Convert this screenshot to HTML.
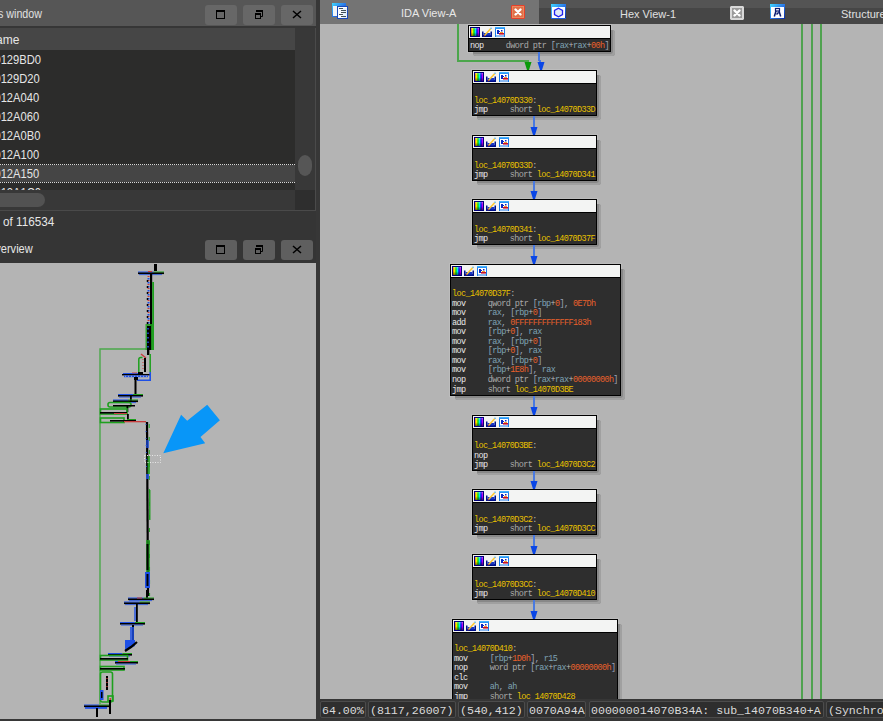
<!DOCTYPE html>
<html><head><meta charset="utf-8">
<style>
*{margin:0;padding:0;box-sizing:border-box}
html,body{width:883px;height:721px;overflow:hidden;background:#373737;font-family:"Liberation Sans",sans-serif}
.a{position:absolute}
.btn{position:absolute;width:32px;height:20px;border-radius:3px;background:#676767}
.btn2{background:#5f5f5f}
.btn svg{position:absolute;left:0;top:0}
.rt{position:absolute;left:-6px;height:19px;line-height:19px;color:#e6e6e6;font-size:12px;transform:scaleX(0.93);transform-origin:6px 0;white-space:pre}
.nd{position:absolute;border:1px solid #000;background:#2e2e2e}
.hal{position:absolute;background:#bcbcbc}
.shd{position:absolute;border-radius:3px;background:#888;box-shadow:inset -2px -2px 0 #a0a0a0}
.hd{position:absolute;left:0;top:0;right:0;height:13px;background:#f3f4f3;border-bottom:1px solid #000}
.ic{position:absolute;left:1px;top:1px}
.ln{position:absolute;left:1px;height:10px;line-height:10px;font-family:"Liberation Mono",monospace;font-size:8.5px;letter-spacing:-0.62px;white-space:pre}
.sb{position:absolute;top:701px;height:17px;background:#2e2e2e;border:1px solid #4c4c4c;border-radius:2px;font-family:"Liberation Mono",monospace;font-size:11.6px;color:#dadada;line-height:15px;padding-top:1px;padding-left:1px;white-space:pre;overflow:hidden}
.tt{position:absolute;font-size:11px;line-height:14px;color:#e0e0e0;white-space:pre}
</style></head><body>
<svg width="0" height="0" style="position:absolute">
<defs>
<linearGradient id="rb" x1="0" x2="1" y1="0" y2="0">
<stop offset="0" stop-color="#ff6000"/><stop offset=".18" stop-color="#ffff00"/><stop offset=".38" stop-color="#00e000"/><stop offset=".55" stop-color="#00ffff"/><stop offset=".75" stop-color="#0000ff"/><stop offset="1" stop-color="#ff00ff"/></linearGradient>
<linearGradient id="dk" x1="0" x2="0" y1="0" y2="1"><stop offset="0" stop-color="#fff" stop-opacity=".3"/><stop offset=".5" stop-color="#000" stop-opacity="0"/><stop offset="1" stop-color="#000" stop-opacity=".55"/></linearGradient>
<linearGradient id="wf" x1="0" x2="1" y1="0" y2="1"><stop offset="0" stop-color="#40d8ff"/><stop offset=".5" stop-color="#2a78e8"/><stop offset="1" stop-color="#0a2aa0"/></linearGradient>
<g id="hicons">
<rect x="0" y="0" width="10" height="10" fill="#00007a"/>
<rect x="1" y="1" width="8" height="8" fill="url(#rb)"/>
<rect x="1" y="1" width="8" height="8" fill="url(#dk)"/>
<path d="M12 4.5 h1.5 v3.5 h7 v-3.5 h1.5 v5.5 h-10z" fill="#00108a"/>
<path d="M13.5 6 L20.5 6 L20.5 8.5 L13.5 8.5z" fill="#1838c8"/>
<path d="M14.2 7.8 L20 1.2 L21.2 2.3 L15.3 8.8z" fill="#ffc830"/>
<path d="M20 1.2 L21.2 2.3 L22 1.2 L21 .3z" fill="#5ab0e8"/>
<path d="M14.2 7.8 L15.3 8.8 L13.6 9.6z" fill="#e86010"/>
<rect x="25" y="0" width="10" height="10" fill="#1a78e8"/>
<rect x="25" y="0" width="10" height="1.5" fill="#40b0ff"/>
<rect x="26" y="2" width="8" height="6.5" fill="#fff"/>
<path d="M27 3 h2 v1 h1 v1 h-1 v2 h-2z" fill="#0a28c0"/>
<rect x="31" y="3" width="1.5" height="1.5" fill="#0a28c0"/>
<rect x="29" y="6" width="5" height="1.6" fill="#c8102a"/>
<rect x="30" y="5" width="3" height="1" fill="#f0a030"/>
<rect x="26" y="9" width="8" height="1" fill="#8ab8f0"/>
</g>
</defs></svg>
<!-- LEFT PANEL: functions window -->
<div class="a" style="left:0;top:0;width:316px;height:26px;background:#565656"></div>
<div class="a" style="left:0;top:26px;width:316px;height:2px;background:#363636"></div>
<div class="tt" style="left:-3px;top:7px;font-size:12px;transform:scaleX(0.89);transform-origin:9px 0">s window</div>
<div class="btn" style="left:205px;top:5px"><svg width="32" height="20"><rect x="11.5" y="5.5" width="8" height="8" fill="none" stroke="#000"/><rect x="11" y="5" width="9" height="2" fill="#000"/></svg></div>
<div class="btn" style="left:243px;top:5px"><svg width="32" height="20"><path d="M13.5 7 V5.5 H19.5 V11.5 H18" fill="none" stroke="#000"/><rect x="13" y="5" width="7" height="2" fill="#000"/><rect x="12.5" y="8.5" width="5" height="5" fill="none" stroke="#000"/><rect x="12" y="8" width="6" height="2" fill="#000"/></svg></div>
<div class="btn" style="left:281px;top:5px"><svg width="32" height="20"><path d="M12 6 L20 13 M20 6 L12 13" stroke="#000" stroke-width="1.5"/></svg></div>
<div class="a" style="left:0;top:28px;width:316px;height:183px;background:#2c2c2b"></div>
<div class="a" style="left:0;top:28px;width:295px;height:22px;background:#464646"></div>
<div class="tt" style="left:-4px;top:33px;font-size:12px;color:#e6e6e6">ame</div>
<div class="a" style="left:0;top:165px;width:295px;height:17px;background:#454545"></div>
<div class="a" style="left:0;top:28px;width:295px;height:162px;overflow:hidden">
<div class="a" style="left:0;top:-28px;width:295px;height:200px"><div class="rt" style="top:51px">0129BD0</div><div class="rt" style="top:70px">0129D20</div><div class="rt" style="top:89px">012A040</div><div class="rt" style="top:108px">012A060</div><div class="rt" style="top:127px">012A0B0</div><div class="rt" style="top:146px">012A100</div><div class="rt" style="top:165px">012A150</div><div class="rt" style="top:184px">012A1C0</div></div></div>
<div class="a" style="left:0;top:164px;width:295px;height:1px;border-top:1px dotted #d8d8d8"></div>
<div class="a" style="left:0;top:182px;width:295px;height:1px;border-top:1px dotted #d8d8d8"></div>
<div class="a" style="left:0;top:190px;width:295px;height:20px;background:#383838"></div>
<div class="a" style="left:-20px;top:193px;width:65px;height:14px;border-radius:7px;background:#525252"></div>
<div class="a" style="left:295px;top:28px;width:20px;height:162px;background:#383838"></div>
<div class="a" style="left:298px;top:155px;width:14px;height:21px;border-radius:7px/9px;background:#565656"></div>
<div class="a" style="left:295px;top:190px;width:20px;height:20px;background:#2e2e2e"></div>
<div class="a" style="left:315px;top:28px;width:1px;height:183px;background:#4a4a4a"></div>
<div class="a" style="left:0;top:210px;width:316px;height:1px;background:#4a4a4a"></div>
<div class="a" style="left:0;top:211px;width:316px;height:52px;background:#353535"></div>
<div class="tt" style="left:3px;top:215px;font-size:12px;color:#e6e6e6;transform:scaleX(0.975);transform-origin:0 0">of 116534</div>
<div class="tt" style="left:-8px;top:242px;font-size:12px;color:#e6e6e6;transform:scaleX(0.92);transform-origin:41px 0">verview</div>
<div class="btn btn2" style="left:205px;top:240px"><svg width="32" height="20"><rect x="11.5" y="5.5" width="8" height="8" fill="none" stroke="#000"/><rect x="11" y="5" width="9" height="2" fill="#000"/></svg></div>
<div class="btn btn2" style="left:243px;top:240px"><svg width="32" height="20"><path d="M13.5 7 V5.5 H19.5 V11.5 H18" fill="none" stroke="#000"/><rect x="13" y="5" width="7" height="2" fill="#000"/><rect x="12.5" y="8.5" width="5" height="5" fill="none" stroke="#000"/><rect x="12" y="8" width="6" height="2" fill="#000"/></svg></div>
<div class="btn btn2" style="left:281px;top:240px"><svg width="32" height="20"><path d="M12 6 L20 13 M20 6 L12 13" stroke="#000" stroke-width="1.5"/></svg></div>
<div class="a" style="left:0;top:263px;width:316px;height:456px;background:#b4b4b4"></div>
<svg class="a" style="left:0;top:0" width="316" height="721" viewBox="0 0 316 721"><path d="M146 349 L100 349 L100 704" fill="none" stroke="#4aa84a" stroke-width="1.4"/><rect x="154" y="264" width="3" height="7" fill="#000"/><rect x="138" y="271.5" width="15.6" height="1.2" fill="#1e50e6"/><rect x="153.6" y="271.5" width="10.4" height="1.2" fill="#1ea01e"/><rect x="138" y="272.5" width="26" height="1.6" fill="#000"/><rect x="139" y="274.1" width="23" height="1" fill="#1e50e6" opacity="0.8"/><rect x="148" y="271" width="4" height="1" fill="#c83c3c"/><rect x="150" y="274" width="2.2" height="76" fill="#000"/><path d="M148.5 276 L148.5 350" fill="none" stroke="#c83c3c" stroke-width="2" stroke-dasharray="1 3"/><path d="M148.5 278 L148.5 350" fill="none" stroke="#1e50e6" stroke-width="2" stroke-dasharray="1.5 2.5"/><path d="M147.5 280 L147.5 350" fill="none" stroke="#000" stroke-width="1.5" stroke-dasharray="2 4"/><rect x="152.2" y="282" width="1.8" height="68" fill="#1ea01e"/><rect x="145.5" y="324" width="8.5" height="26" fill="#1ea01e" opacity="0.85"/><rect x="147" y="326" width="4" height="24" fill="#000"/><path d="M148 328 L148 348" fill="none" stroke="#1e50e6" stroke-width="1.5" stroke-dasharray="1.5 3"/><rect x="147" y="349" width="2.4" height="6" fill="#000"/><path d="M141 354 L146 358" fill="none" stroke="#c83c3c" stroke-width="1.5"/><path d="M138.8 372 V359.5 Q138.8 357.5 140.8 357.5 H142.5 M150.2 354 V372" fill="none" stroke="#1ea01e" stroke-width="1.5"/><rect x="144" y="358" width="2" height="14" fill="#000"/><path d="M143 359 L143 371" fill="none" stroke="#c83c3c" stroke-width="1" stroke-dasharray="1 2"/><rect x="123" y="373" width="15" height="1" fill="#1e50e6"/><rect x="132" y="372.5" width="5" height="0.8" fill="#c83c3c"/><rect x="122" y="374" width="29" height="1.4" fill="#000"/><rect x="138" y="372" width="5" height="3" fill="#000"/><rect x="124" y="375.4" width="24" height="1.8" fill="#1e50e6"/><path d="M125 376.3 L147 376.3" fill="none" stroke="#dadada" stroke-width="0.7" stroke-dasharray="1 2"/><path d="M137 380.2 H150.2 V372" fill="none" stroke="#1e50e6" stroke-width="1.6"/><rect x="134" y="377" width="4" height="3" fill="#000"/><rect x="134.5" y="379" width="2" height="15" fill="#000"/><rect x="118" y="394" width="15.0" height="1.2" fill="#1e50e6"/><rect x="133.0" y="394" width="10.0" height="1.2" fill="#1ea01e"/><rect x="118" y="395" width="25" height="1.6" fill="#000"/><rect x="119" y="396.6" width="22" height="1" fill="#1e50e6" opacity="0.8"/><rect x="130" y="396" width="1.8" height="5" fill="#000"/><rect x="113" y="399.5" width="15.0" height="1.2" fill="#1e50e6"/><rect x="128.0" y="399.5" width="10.0" height="1.2" fill="#1ea01e"/><rect x="113" y="400.5" width="25" height="1.6" fill="#000"/><rect x="114" y="402.1" width="22" height="1" fill="#1e50e6" opacity="0.8"/><rect x="108" y="402.5" width="23" height="4.5" fill="none" stroke="#1ea01e" stroke-width="1.6" rx="2"/><rect x="113" y="405" width="22" height="1.5" fill="#000"/><rect x="126.5" y="406" width="1.8" height="6" fill="#000"/><rect x="100.5" y="409" width="26.5" height="5" fill="none" stroke="#1ea01e" stroke-width="1.6" rx="0"/><rect x="100" y="412" width="27" height="1.6" fill="#000"/><rect x="114" y="413" width="13" height="1" fill="#c83c3c"/><rect x="127" y="414" width="1.8" height="6" fill="#000"/><rect x="100.5" y="418" width="23.5" height="4.5" fill="none" stroke="#1ea01e" stroke-width="1.6" rx="0"/><rect x="110" y="420" width="26" height="1.6" fill="#000"/><rect x="127" y="419" width="9" height="1" fill="#1ea01e"/><rect x="124" y="421" width="22" height="1.3" fill="#c83c3c"/><path d="M147 422 L148 596" fill="none" stroke="#000" stroke-width="2.2"/><path d="M149.2 424 L149.6 596" fill="none" stroke="#1ea01e" stroke-width="1" stroke-dasharray="4 9"/><path d="M146 424 L146.5 470" fill="none" stroke="#1e50e6" stroke-width="1" stroke-dasharray="1 6"/><rect x="146" y="440" width="3" height="8" fill="#1e50e6" opacity="0.7"/><rect x="147.5" y="456" width="2.5" height="18" fill="#1ea01e" opacity="0.8"/><rect x="146" y="474" width="3" height="5" fill="#1e50e6" opacity="0.8"/><rect x="149" y="490" width="1.5" height="30" fill="#1ea01e" opacity="0.9"/><rect x="146" y="540" width="4" height="32" fill="#1ea01e" opacity="0.75"/><rect x="146.5" y="544" width="2" height="26" fill="#000"/><rect x="145" y="572" width="5" height="16" fill="#1e50e6"/><rect x="146.5" y="574" width="2" height="12" fill="#000"/><rect x="146" y="590" width="2" height="8" fill="#000"/><rect x="128" y="597.5" width="15.6" height="1.2" fill="#1e50e6"/><rect x="143.6" y="597.5" width="10.4" height="1.2" fill="#1ea01e"/><rect x="128" y="598.5" width="26" height="1.6" fill="#000"/><rect x="129" y="600.1" width="23" height="1" fill="#1e50e6" opacity="0.8"/><rect x="137" y="597.5" width="5" height="1" fill="#c83c3c"/><rect x="124" y="601.5" width="15.6" height="1.2" fill="#1e50e6"/><rect x="139.6" y="601.5" width="10.4" height="1.2" fill="#1ea01e"/><rect x="124" y="602.5" width="26" height="1.6" fill="#000"/><rect x="125" y="604.1" width="23" height="1" fill="#1e50e6" opacity="0.8"/><rect x="136" y="604" width="1.8" height="18" fill="#000"/><rect x="134" y="607" width="2" height="14" fill="#1e50e6" opacity="0.7"/><rect x="120" y="622" width="15.0" height="1.2" fill="#1e50e6"/><rect x="135.0" y="622" width="10.0" height="1.2" fill="#1ea01e"/><rect x="120" y="623" width="25" height="1.6" fill="#000"/><rect x="121" y="624.6" width="22" height="1" fill="#1e50e6" opacity="0.8"/><rect x="132" y="625" width="2" height="16" fill="#000"/><rect x="130" y="627" width="4" height="13" fill="#1e50e6" opacity="0.8"/><path d="M125 640 L135 640 L135 646 L127 650 L125 650z" fill="#1e50e6"/><path d="M137 642 L131 647 L125 651" fill="none" stroke="#000" stroke-width="2.2"/><rect x="108" y="653" width="14.399999999999999" height="1.2" fill="#1e50e6"/><rect x="122.4" y="653" width="9.600000000000001" height="1.2" fill="#1ea01e"/><rect x="108" y="654" width="24" height="1.6" fill="#000"/><rect x="109" y="655.6" width="21" height="1" fill="#1e50e6" opacity="0.8"/><rect x="100.5" y="655.5" width="27" height="4.5" fill="none" stroke="#1ea01e" stroke-width="1.6" rx="0"/><rect x="100" y="658" width="28" height="1.6" fill="#000"/><rect x="115" y="661" width="13.799999999999999" height="1.2" fill="#1e50e6"/><rect x="128.8" y="661" width="9.200000000000001" height="1.2" fill="#1ea01e"/><rect x="115" y="662" width="23" height="1.6" fill="#000"/><rect x="116" y="663.6" width="20" height="1" fill="#1e50e6" opacity="0.8"/><rect x="118" y="661" width="12" height="1" fill="#c83c3c"/><rect x="100.5" y="666.5" width="23.5" height="3.5" fill="none" stroke="#1ea01e" stroke-width="1.6" rx="0"/><rect x="100" y="668" width="25" height="1.6" fill="#000"/><rect x="100.5" y="672" width="12" height="30" fill="none" stroke="#1ea01e" stroke-width="1.6" rx="2"/><rect x="106" y="676" width="2" height="14" fill="#000"/><path d="M107 678 L107 690" fill="none" stroke="#c83c3c" stroke-width="1.3" stroke-dasharray="1 3"/><rect x="100" y="690" width="3.5" height="10" fill="#1e50e6"/><rect x="101" y="692" width="1.5" height="6" fill="#000"/><rect x="108" y="696" width="5" height="5" fill="none" stroke="#1ea01e" stroke-width="1.6" rx="0"/><rect x="109.5" y="698" width="1.5" height="3" fill="#c83c3c"/><rect x="84" y="704.5" width="15.0" height="1.2" fill="#1e50e6"/><rect x="99.0" y="704.5" width="10.0" height="1.2" fill="#1ea01e"/><rect x="84" y="705.5" width="25" height="1.6" fill="#000"/><rect x="85" y="707.1" width="22" height="1" fill="#1e50e6" opacity="0.8"/><rect x="85" y="707" width="22" height="2" fill="#1e50e6" opacity="0.8"/><rect x="109" y="700" width="2" height="14" fill="#000"/><rect x="96" y="708" width="2" height="9" fill="#000"/><rect x="144.5" y="455.5" width="16" height="7" fill="none" stroke="#e8e8e8" stroke-width="1" stroke-dasharray="1 1.5"/><path d="M163.3 453.3 L181.1 414.8 L187.2 420.7 L207.2 404.8 L219.9 420.3 L200.5 437 L205.2 443.3 Z" fill="#0896f8"/></svg>
<!-- RIGHT PANEL -->
<div class="a" style="left:320px;top:0;width:563px;height:8px;background:#545454"></div>
<div class="a" style="left:539px;top:8px;width:344px;height:16px;background:#464646"></div>
<div class="a" style="left:320px;top:0;width:219px;height:24px;background:#747474"></div>
<svg class="a" style="left:332px;top:3px" width="17" height="17">
<rect x="0" y="0" width="14" height="14" fill="url(#wf)"/>
<rect x="1" y="3" width="12" height="10" fill="#f2f5f8"/>
<rect x="5" y="3" width="11" height="13" fill="#1848b8"/>
<rect x="6" y="4" width="9" height="11" fill="#fafcff"/>
<rect x="11" y="5" width="4" height="10" fill="#e4f0fc"/>
<rect x="7" y="5" width="4" height="1" fill="#405058"/>
<rect x="9" y="7" width="5" height="1" fill="#405058"/>
<rect x="9" y="9" width="5" height="1" fill="#405058"/>
<rect x="7" y="11" width="4" height="1" fill="#405058"/>
<rect x="9" y="13" width="5" height="1" fill="#405058"/>
</svg>
<div class="tt" style="left:401px;top:6px;color:#e8e8e8">IDA View-A</div>
<svg class="a" style="left:511px;top:5px" width="14" height="14">
<path d="M1 0 H13 L14 1 V13 L13 14 H1 L0 13 V1z" fill="#e8402a"/>
<rect x="1" y="1" width="12" height="12" fill="#e88a60"/>
<rect x="2" y="2" width="10" height="10" fill="#e07048"/>
<path d="M4.5 4.5 L9.5 9.5 M9.5 4.5 L4.5 9.5" stroke="#fff" stroke-width="2.4" stroke-linecap="round"/>
</svg>
<svg class="a" style="left:551px;top:4px" width="15" height="15">
<rect x="0" y="0" width="15" height="15" fill="url(#wf)"/>
<rect x="0" y="14" width="15" height="1" fill="#1a5ad8"/>
<rect x="1" y="3" width="13" height="11" fill="#fcfdff"/>
<path d="M7.5 4.2 L11.5 6.5 V10.5 L7.5 12.7 L3.5 10.5 V6.5z" fill="#dfe8f8" stroke="#2020f0" stroke-width="1.3"/>
</svg>
<div class="tt" style="left:620px;top:7px;color:#e0e0e0">Hex View-1</div>
<svg class="a" style="left:730px;top:6px" width="14" height="14">
<path d="M1 0 H13 L14 1 V13 L13 14 H1 L0 13 V1z" fill="#d8d8d8"/>
<rect x="2" y="2" width="10" height="10" fill="#9a9a9a"/>
<path d="M4.5 4.5 L9.5 9.5 M9.5 4.5 L4.5 9.5" stroke="#fff" stroke-width="2.4" stroke-linecap="round"/>
</svg>
<svg class="a" style="left:770px;top:4px" width="15" height="15">
<rect x="0" y="0" width="15" height="15" fill="url(#wf)"/>
<rect x="1" y="3" width="13" height="11" fill="#fcfdff"/>
<rect x="5.5" y="4.5" width="4" height="2.5" fill="#fff" stroke="#0a1a70" stroke-width="1.2"/>
<path d="M6 7 L4.3 12.5 M9 7 L10.7 12.5 M6.5 10.5 L8.5 8.5" stroke="#0a1a70" stroke-width="1.5"/>
</svg>
<div class="tt" style="left:841px;top:7px;color:#e0e0e0">Structures</div>
<div class="a" style="left:320px;top:24px;width:563px;height:675px;overflow:hidden;background:#b4b4b4">
<div class="a" style="left:-320px;top:-24px;width:883px;height:721px">
<div class="a" style="left:801px;top:24px;width:2px;height:675px;background:#50a250"></div>
<div class="a" style="left:811px;top:24px;width:2px;height:675px;background:#50a250"></div>
<div class="a" style="left:820px;top:24px;width:2px;height:675px;background:#50a250"></div>
<div class="a" style="left:538px;top:24px;width:2px;height:1px;background:#c01818"></div>
<div class="hal" style="left:467px;top:24px;width:145px;height:29px"></div><div class="shd" style="left:473px;top:30px;width:142px;height:26px"></div><div class="nd" style="left:468px;top:25px;width:143px;height:27px"><div class="hd"><svg class="ic" width="40" height="11"><use href="#hicons"/></svg></div><div class="ln" style="top:15px"><span style="color:#e8e8e8">nop     </span><span style="color:#a9a9a9">dword ptr </span><span style="color:#9ca4b8">[</span><span style="color:#7ea3b4">rax</span><span style="color:#b8b8b8">+</span><span style="color:#7ea3b4">rax</span><span style="color:#b8b8b8">+</span><span style="color:#e8602c">00h</span><span style="color:#9ca4b8">]</span></div></div>
<div class="hal" style="left:471px;top:69px;width:127px;height:48px"></div><div class="shd" style="left:477px;top:75px;width:124px;height:45px"></div><div class="nd" style="left:472px;top:70px;width:125px;height:46px"><div class="hd"><svg class="ic" width="40" height="11"><use href="#hicons"/></svg></div><div class="ln" style="top:25px"><span style="color:#e8c000">loc_14070D330</span><span style="color:#b8b8b8">:</span></div><div class="ln" style="top:34px"><span style="color:#e8e8e8">jmp     </span><span style="color:#a9a9a9">short </span><span style="color:#e8c000">loc_14070D33D</span></div></div>
<div class="hal" style="left:471px;top:134px;width:127px;height:48px"></div><div class="shd" style="left:477px;top:140px;width:124px;height:45px"></div><div class="nd" style="left:472px;top:135px;width:125px;height:46px"><div class="hd"><svg class="ic" width="40" height="11"><use href="#hicons"/></svg></div><div class="ln" style="top:25px"><span style="color:#e8c000">loc_14070D33D</span><span style="color:#b8b8b8">:</span></div><div class="ln" style="top:34px"><span style="color:#e8e8e8">jmp     </span><span style="color:#a9a9a9">short </span><span style="color:#e8c000">loc_14070D341</span></div></div>
<div class="hal" style="left:471px;top:198px;width:127px;height:48px"></div><div class="shd" style="left:477px;top:204px;width:124px;height:45px"></div><div class="nd" style="left:472px;top:199px;width:125px;height:46px"><div class="hd"><svg class="ic" width="40" height="11"><use href="#hicons"/></svg></div><div class="ln" style="top:25px"><span style="color:#e8c000">loc_14070D341</span><span style="color:#b8b8b8">:</span></div><div class="ln" style="top:34px"><span style="color:#e8e8e8">jmp     </span><span style="color:#a9a9a9">short </span><span style="color:#e8c000">loc_14070D37F</span></div></div>
<div class="hal" style="left:449px;top:263px;width:173px;height:134px"></div><div class="shd" style="left:455px;top:269px;width:170px;height:131px"></div><div class="nd" style="left:450px;top:264px;width:171px;height:132px"><div class="hd"><svg class="ic" width="40" height="11"><use href="#hicons"/></svg></div><div class="ln" style="top:24px"><span style="color:#e8c000">loc_14070D37F</span><span style="color:#b8b8b8">:</span></div><div class="ln" style="top:34px"><span style="color:#e8e8e8">mov     </span><span style="color:#a9a9a9">qword ptr </span><span style="color:#9ca4b8">[</span><span style="color:#7ea3b4">rbp</span><span style="color:#b8b8b8">+</span><span style="color:#e8602c">0</span><span style="color:#9ca4b8">]</span><span style="color:#9ca4b8">, </span><span style="color:#e8602c">0E7Dh</span></div><div class="ln" style="top:43px"><span style="color:#e8e8e8">mov     </span><span style="color:#7ea3b4">rax</span><span style="color:#9ca4b8">, </span><span style="color:#9ca4b8">[</span><span style="color:#7ea3b4">rbp</span><span style="color:#b8b8b8">+</span><span style="color:#e8602c">0</span><span style="color:#9ca4b8">]</span></div><div class="ln" style="top:53px"><span style="color:#e8e8e8">add     </span><span style="color:#7ea3b4">rax</span><span style="color:#9ca4b8">, </span><span style="color:#e8602c">0FFFFFFFFFFFFF183h</span></div><div class="ln" style="top:62px"><span style="color:#e8e8e8">mov     </span><span style="color:#9ca4b8">[</span><span style="color:#7ea3b4">rbp</span><span style="color:#b8b8b8">+</span><span style="color:#e8602c">0</span><span style="color:#9ca4b8">]</span><span style="color:#9ca4b8">, </span><span style="color:#7ea3b4">rax</span></div><div class="ln" style="top:72px"><span style="color:#e8e8e8">mov     </span><span style="color:#7ea3b4">rax</span><span style="color:#9ca4b8">, </span><span style="color:#9ca4b8">[</span><span style="color:#7ea3b4">rbp</span><span style="color:#b8b8b8">+</span><span style="color:#e8602c">0</span><span style="color:#9ca4b8">]</span></div><div class="ln" style="top:81px"><span style="color:#e8e8e8">mov     </span><span style="color:#9ca4b8">[</span><span style="color:#7ea3b4">rbp</span><span style="color:#b8b8b8">+</span><span style="color:#e8602c">0</span><span style="color:#9ca4b8">]</span><span style="color:#9ca4b8">, </span><span style="color:#7ea3b4">rax</span></div><div class="ln" style="top:91px"><span style="color:#e8e8e8">mov     </span><span style="color:#7ea3b4">rax</span><span style="color:#9ca4b8">, </span><span style="color:#9ca4b8">[</span><span style="color:#7ea3b4">rbp</span><span style="color:#b8b8b8">+</span><span style="color:#e8602c">0</span><span style="color:#9ca4b8">]</span></div><div class="ln" style="top:100px"><span style="color:#e8e8e8">mov     </span><span style="color:#9ca4b8">[</span><span style="color:#7ea3b4">rbp</span><span style="color:#b8b8b8">+</span><span style="color:#e8602c">1E8h</span><span style="color:#9ca4b8">]</span><span style="color:#9ca4b8">, </span><span style="color:#7ea3b4">rax</span></div><div class="ln" style="top:110px"><span style="color:#e8e8e8">nop     </span><span style="color:#a9a9a9">dword ptr </span><span style="color:#9ca4b8">[</span><span style="color:#7ea3b4">rax</span><span style="color:#b8b8b8">+</span><span style="color:#7ea3b4">rax</span><span style="color:#b8b8b8">+</span><span style="color:#e8602c">00000000h</span><span style="color:#9ca4b8">]</span></div><div class="ln" style="top:120px"><span style="color:#e8e8e8">jmp     </span><span style="color:#a9a9a9">short </span><span style="color:#e8c000">loc_14070D3BE</span></div></div>
<div class="hal" style="left:471px;top:414px;width:127px;height:58px"></div><div class="shd" style="left:477px;top:420px;width:124px;height:55px"></div><div class="nd" style="left:472px;top:415px;width:125px;height:56px"><div class="hd"><svg class="ic" width="40" height="11"><use href="#hicons"/></svg></div><div class="ln" style="top:25px"><span style="color:#e8c000">loc_14070D3BE</span><span style="color:#b8b8b8">:</span></div><div class="ln" style="top:35px"><span style="color:#e8e8e8">nop     </span></div><div class="ln" style="top:44px"><span style="color:#e8e8e8">jmp     </span><span style="color:#a9a9a9">short </span><span style="color:#e8c000">loc_14070D3C2</span></div></div>
<div class="hal" style="left:471px;top:488px;width:127px;height:48px"></div><div class="shd" style="left:477px;top:494px;width:124px;height:45px"></div><div class="nd" style="left:472px;top:489px;width:125px;height:46px"><div class="hd"><svg class="ic" width="40" height="11"><use href="#hicons"/></svg></div><div class="ln" style="top:25px"><span style="color:#e8c000">loc_14070D3C2</span><span style="color:#b8b8b8">:</span></div><div class="ln" style="top:34px"><span style="color:#e8e8e8">jmp     </span><span style="color:#a9a9a9">short </span><span style="color:#e8c000">loc_14070D3CC</span></div></div>
<div class="hal" style="left:471px;top:553px;width:127px;height:48px"></div><div class="shd" style="left:477px;top:559px;width:124px;height:45px"></div><div class="nd" style="left:472px;top:554px;width:125px;height:46px"><div class="hd"><svg class="ic" width="40" height="11"><use href="#hicons"/></svg></div><div class="ln" style="top:25px"><span style="color:#e8c000">loc_14070D3CC</span><span style="color:#b8b8b8">:</span></div><div class="ln" style="top:34px"><span style="color:#e8e8e8">jmp     </span><span style="color:#a9a9a9">short </span><span style="color:#e8c000">loc_14070D410</span></div></div>
<div class="hal" style="left:451px;top:618px;width:168px;height:102px"></div><div class="shd" style="left:457px;top:624px;width:165px;height:99px"></div><div class="nd" style="left:452px;top:619px;width:166px;height:100px"><div class="hd"><svg class="ic" width="40" height="11"><use href="#hicons"/></svg></div><div class="ln" style="top:24px"><span style="color:#e8c000">loc_14070D410</span><span style="color:#b8b8b8">:</span></div><div class="ln" style="top:34px"><span style="color:#e8e8e8">mov     </span><span style="color:#9ca4b8">[</span><span style="color:#7ea3b4">rbp</span><span style="color:#b8b8b8">+</span><span style="color:#e8602c">1D0h</span><span style="color:#9ca4b8">]</span><span style="color:#9ca4b8">, </span><span style="color:#7ea3b4">r15</span></div><div class="ln" style="top:43px"><span style="color:#e8e8e8">nop     </span><span style="color:#a9a9a9">word ptr </span><span style="color:#9ca4b8">[</span><span style="color:#7ea3b4">rax</span><span style="color:#b8b8b8">+</span><span style="color:#7ea3b4">rax</span><span style="color:#b8b8b8">+</span><span style="color:#e8602c">00000000h</span><span style="color:#9ca4b8">]</span></div><div class="ln" style="top:53px"><span style="color:#e8e8e8">clc     </span></div><div class="ln" style="top:62px"><span style="color:#e8e8e8">mov     </span><span style="color:#7ea3b4">ah</span><span style="color:#9ca4b8">, </span><span style="color:#7ea3b4">ah</span></div><div class="ln" style="top:72px"><span style="color:#e8e8e8">jmp     </span><span style="color:#a9a9a9">short </span><span style="color:#e8c000">loc_14070D428</span></div></div>
<div class="a" style="left:457px;top:24px;width:2px;height:38px;background:#4ca64c"></div><div class="a" style="left:457px;top:60px;width:72px;height:2px;background:#4ca64c"></div><svg class="a" style="left:524px;top:62px" width="8" height="8"><path d="M0.5 0 L7.5 0 L5 8 L3 8z" fill="#0a9a0a"/></svg><div class="a" style="left:538px;top:52px;width:2px;height:9px;background:#4a7ae0"></div><div class="a" style="left:539px;top:60px;width:2px;height:4px;background:#4a7ae0"></div><svg class="a" style="left:537px;top:62px" width="8" height="8"><path d="M0.5 0 L7.5 0 L5 8 L3 8z" fill="#0a46e6"/></svg><div class="a" style="left:533px;top:116px;width:2px;height:13px;background:#4a7ae0"></div><svg class="a" style="left:530px;top:127px" width="8" height="8"><path d="M0.5 0 L7.5 0 L5 8 L3 8z" fill="#0a46e6"/></svg><div class="a" style="left:533px;top:181px;width:2px;height:12px;background:#4a7ae0"></div><svg class="a" style="left:530px;top:191px" width="8" height="8"><path d="M0.5 0 L7.5 0 L5 8 L3 8z" fill="#0a46e6"/></svg><div class="a" style="left:533px;top:245px;width:2px;height:13px;background:#4a7ae0"></div><svg class="a" style="left:530px;top:256px" width="8" height="8"><path d="M0.5 0 L7.5 0 L5 8 L3 8z" fill="#0a46e6"/></svg><div class="a" style="left:533px;top:396px;width:2px;height:13px;background:#4a7ae0"></div><svg class="a" style="left:530px;top:407px" width="8" height="8"><path d="M0.5 0 L7.5 0 L5 8 L3 8z" fill="#0a46e6"/></svg><div class="a" style="left:533px;top:471px;width:2px;height:12px;background:#4a7ae0"></div><svg class="a" style="left:530px;top:481px" width="8" height="8"><path d="M0.5 0 L7.5 0 L5 8 L3 8z" fill="#0a46e6"/></svg><div class="a" style="left:533px;top:535px;width:2px;height:13px;background:#4a7ae0"></div><svg class="a" style="left:530px;top:546px" width="8" height="8"><path d="M0.5 0 L7.5 0 L5 8 L3 8z" fill="#0a46e6"/></svg><div class="a" style="left:533px;top:600px;width:2px;height:13px;background:#4a7ae0"></div><svg class="a" style="left:530px;top:611px" width="8" height="8"><path d="M0.5 0 L7.5 0 L5 8 L3 8z" fill="#0a46e6"/></svg>
</div></div>
<!-- status bar -->
<div class="a" style="left:320px;top:699px;width:563px;height:22px;background:#363636"></div>
<div class="sb" style="left:320px;width:46px">64.00%</div>
<div class="sb" style="left:368px;width:88px">(8117,26007)</div>
<div class="sb" style="left:458px;width:67px">(540,412)</div>
<div class="sb" style="left:527px;width:59px">0070A94A</div>
<div class="sb" style="left:589px;width:235px">000000014070B34A: sub_14070B340+A</div>
<div class="sb" style="left:826px;width:120px">(Synchronized with Hex View-1)</div>
</body></html>
